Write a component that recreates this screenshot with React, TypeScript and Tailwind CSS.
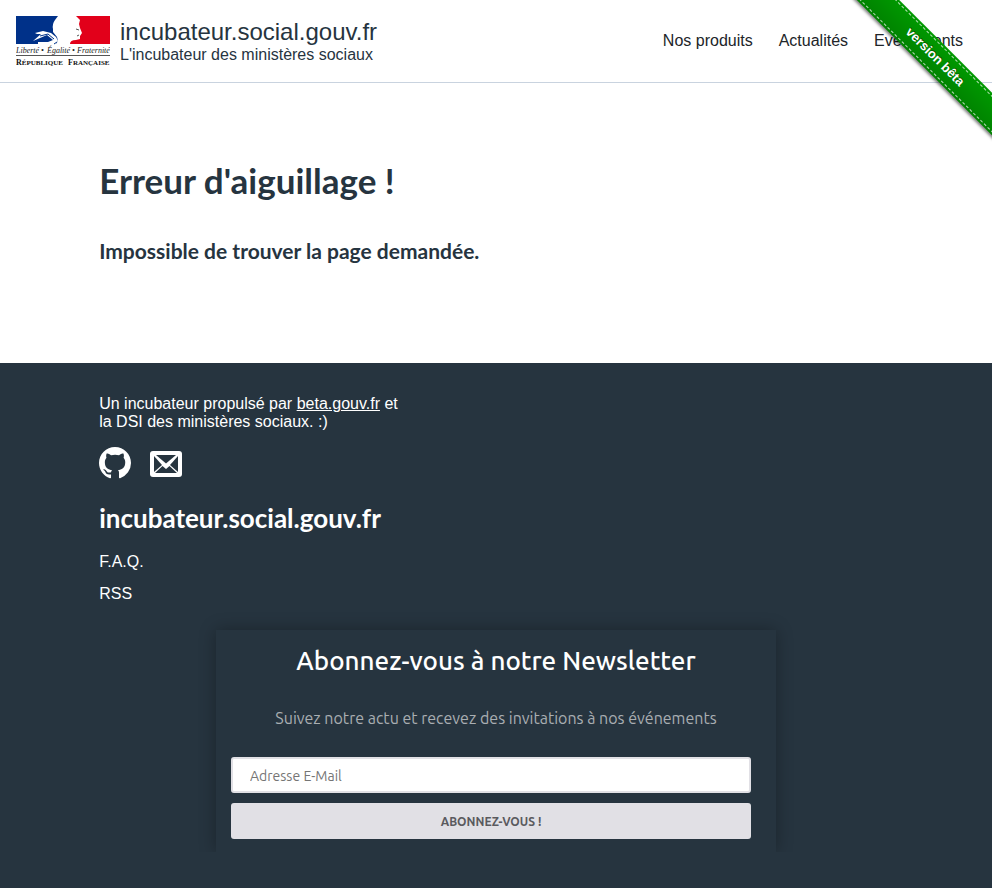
import React from "react";

function Logo() {
  return (
    <svg width="94" height="50" viewBox="0 0 94 50" role="img" aria-label="République Française" className="block shrink-0">
      <path fill="#003189" d="M0 0H42L39 4Q36 8 37 13L37 16L41 21L42 25L40 28H0Z" />
      <path fill="#e2001a" d="M60 0H94V28H54Q54 24 60 24L64 23L64 20L66 17L64 12L63 8L64 4Z" />
      <path fill="#fff" d="M17 25L25 18L21 18L19 17L27 15L35 17L40 21L42 25L40 28H22L22 26L32 26L37 24L31 19L24 22Z" />
      <path fill="none" stroke="#003189" strokeWidth="1" d="M24 20L32 18L38 23M22 24L30 23L35 24M38 28L41 26" />
      <path fill="none" stroke="#555" strokeWidth="1" d="M60 13L63 14M63 19L61 20" />
      <g fontFamily="'Liberation Serif', serif" fontStyle="italic" fontSize="8" fill="#222">
        <text x="0" y="37">Liberté</text>
        <text x="25" y="37">•</text>
        <text x="31" y="37">Égalité</text>
        <text x="56" y="37">•</text>
        <text x="61" y="37">Fraternité</text>
      </g>
      <path stroke="#555" strokeWidth="1" d="M0 39.5H94" />
      <g fontFamily="'Liberation Serif', serif" fontWeight="700" fontSize="7" fill="#111">
        <text x="0" y="49"><tspan fontSize="8">R</tspan>ÉPUBLIQUE</text>
        <text x="52" y="49"><tspan fontSize="8">F</tspan>RANÇAISE</text>
      </g>
    </svg>
  );
}

function GithubIcon() {
  return (
    <svg width="32" height="32" viewBox="0 0 16 16" fill="#fff" aria-hidden="true" className="block">
      <path d="M8 0C3.58 0 0 3.58 0 8c0 3.54 2.29 6.53 5.47 7.59.4.07.55-.17.55-.38 0-.19-.01-.82-.01-1.49-2.01.37-2.53-.49-2.69-.94-.09-.23-.48-.94-.82-1.13-.28-.15-.68-.52-.01-.53.63-.01 1.08.58 1.23.82.72 1.21 1.87.87 2.33.66.07-.52.28-.87.51-1.07-1.78-.2-3.64-.89-3.64-3.95 0-.87.31-1.59.82-2.15-.08-.2-.36-1.02.08-2.12 0 0 .67-.21 2.2.82.64-.18 1.32-.27 2-.27s1.36.09 2 .27c1.53-1.04 2.2-.82 2.2-.82.44 1.1.16 1.92.08 2.12.51.56.82 1.27.82 2.15 0 3.07-1.87 3.75-3.65 3.95.29.25.54.73.54 1.48 0 1.07-.01 1.93-.01 2.2 0 .21.15.46.55.38A8.01 8.01 0 0 0 16 8c0-4.42-3.58-8-8-8z" />
    </svg>
  );
}

function MailIcon() {
  return (
    <svg width="32" height="26" viewBox="0 0 32 26" aria-hidden="true" className="block">
      <rect width="32" height="26" rx="3" fill="#fff" />
      <g fill="#26343f">
        <path d="M6 4H26L16 12.5Z" />
        <path d="M4 5L12 14L4 21Z" />
        <path d="M28 5L20 14L28 21Z" />
        <path d="M5 22L12.5 15L16 18L19.5 15L27 22Z" />
      </g>
    </svg>
  );
}

function Ribbon() {
  return (
    <div className="pointer-events-none absolute top-0 right-0 h-[157px] w-[157px] overflow-hidden">
      <a
        href="#beta"
        className="pointer-events-auto absolute top-[42px] -right-[43px] block h-[30px] w-[200px] rotate-45 bg-[#090] bg-linear-to-b from-transparent to-black/15 py-[5px] text-center text-[13px] leading-5 font-bold text-white shadow-[0_2px_3px_rgba(0,0,0,0.5)] [text-shadow:0_-1px_rgba(0,0,0,0.5)]"
      >
        <span className="absolute inset-x-0 inset-y-[2px] border-y border-dashed border-white/70" />
        version bêta
      </a>
    </div>
  );
}

function Newsletter() {
  return (
    <div className="mx-auto max-w-[600px] overflow-hidden px-5 pt-5 font-['Ubuntu','Noto_Sans',sans-serif]">
      <form className="px-[15px] pt-3 pb-[13px] shadow-[0_0_16px_rgba(0,0,0,0.3)]" onSubmit={(e) => e.preventDefault()}>
        <h3 className="text-center text-[26px] leading-[38px] font-medium text-white">Abonnez-vous à notre Newsletter</h3>
        <p className="mt-[26px] text-center text-[16px] leading-6 text-[#a9aeb2]">
          Suivez notre actu et recevez des invitations à nos événements
        </p>
        <div className="mt-[27px] mr-[10px] flex flex-col gap-[10px]">
          <input
            type="email"
            aria-label="Adresse E-Mail"
            placeholder="Adresse E-Mail"
            className="h-9 w-full rounded-[3px] border-2 border-[#e1e0e5] bg-white px-[17px] pt-px text-[14px] text-gray-700 placeholder:text-[#757575]"
          />
          <button type="submit" className="h-9 w-full rounded-[3px] bg-[#e1e0e5] pt-px text-[12px] font-bold text-[#5a5a5e]">
            ABONNEZ-VOUS !
          </button>
        </div>
      </form>
    </div>
  );
}

export default function App() {
  return (
    <div className="relative flex min-h-screen flex-col bg-white font-['Liberation_Sans',Arial,sans-serif] text-[#26343f]">
      <header className="flex items-center justify-between border-b border-[#c9d3df] py-4 pr-[29px] pl-4">
        <a href="#accueil" className="flex gap-[10px]">
          <Logo />
          <div className="pt-[2px]">
            <div className="text-[24px] leading-7">incubateur.social.gouv.fr</div>
            <div className="text-[16px] leading-[18px]">L'incubateur des ministères sociaux</div>
          </div>
        </a>
        <nav className="flex gap-[26px] text-[16px] leading-6 text-[#212529]">
          <a href="#produits">Nos produits</a>
          <a href="#actualites">Actualités</a>
          <a href="#evenements">Evénements</a>
        </nav>
      </header>

      <main className="px-[10%] pt-[73px] pb-[97px] font-['Trebuchet_MS',Lato,sans-serif] font-bold">
        <h1 className="text-[35px] leading-12">Erreur d'aiguillage !</h1>
        <h2 className="mt-8 text-[21px] leading-[30px]">Impossible de trouver la page demandée.</h2>
      </main>

      <footer className="flex-1 bg-[#26343f] pt-8 pb-9 text-white">
        <div className="px-[10%]">
          <p className="text-[16px] leading-[18px]">
            Un incubateur propulsé par <a href="#beta-gouv" className="underline">beta.gouv.fr</a> et
            <br />
            la DSI des ministères sociaux. :)
          </p>
          <div className="mt-4 flex items-end gap-[19px]">
            <a href="#github" aria-label="GitHub"><GithubIcon /></a>
            <a href="#contact" aria-label="E-mail" className="pb-[2px]"><MailIcon /></a>
          </div>
          <h3 className="mt-[23px] font-['Trebuchet_MS',Lato,sans-serif] text-[26px] leading-8 font-bold">incubateur.social.gouv.fr</h3>
          <ul className="mt-3 text-[16px] leading-8">
            <li><a href="#faq">F.A.Q.</a></li>
            <li><a href="#rss">RSS</a></li>
          </ul>
        </div>
        <Newsletter />
      </footer>
      <Ribbon />
    </div>
  );
}
